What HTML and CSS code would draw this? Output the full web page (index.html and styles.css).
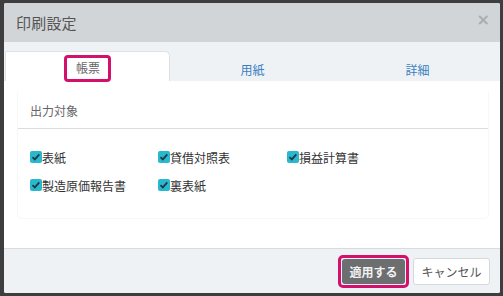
FILE: index.html
```html
<!DOCTYPE html>
<html lang="ja">
<head>
<meta charset="utf-8">
<link rel="stylesheet" href="styles.css">
</head>
<body>
<div class="dialog">
  <div class="header">
    <span class="title">印刷設定</span>
    <span class="close">×</span>
  </div>
  <div class="tabs">
    <div class="tab active"><span class="highlight">帳票</span></div>
    <div class="tab">用紙</div>
    <div class="tab">詳細</div>
  </div>
  <div class="body">
    <div class="panel">
      <div class="legend">出力対象</div>
      <div class="checks">
        <label class="check"><span class="box"><svg viewBox="0 0 12 12" width="12" height="12"><path d="M2.5 6.2 L4.8 8.4 L9.3 3.4" fill="none" stroke="#1d3a44" stroke-width="1.8"/></svg></span>表紙</label>
        <label class="check"><span class="box"><svg viewBox="0 0 12 12" width="12" height="12"><path d="M2.5 6.2 L4.8 8.4 L9.3 3.4" fill="none" stroke="#1d3a44" stroke-width="1.8"/></svg></span>貸借対照表</label>
        <label class="check"><span class="box"><svg viewBox="0 0 12 12" width="12" height="12"><path d="M2.5 6.2 L4.8 8.4 L9.3 3.4" fill="none" stroke="#1d3a44" stroke-width="1.8"/></svg></span>損益計算書</label>
        <label class="check"><span class="box"><svg viewBox="0 0 12 12" width="12" height="12"><path d="M2.5 6.2 L4.8 8.4 L9.3 3.4" fill="none" stroke="#1d3a44" stroke-width="1.8"/></svg></span>製造原価報告書</label>
        <label class="check"><span class="box"><svg viewBox="0 0 12 12" width="12" height="12"><path d="M2.5 6.2 L4.8 8.4 L9.3 3.4" fill="none" stroke="#1d3a44" stroke-width="1.8"/></svg></span>裏表紙</label>
      </div>
    </div>
  </div>
  <div class="footer">
    <span class="ring"><button class="btn primary">適用する</button></span>
    <button class="btn cancel">キャンセル</button>
  </div>
</div>
</body>
</html>
```
FILE: styles.css
```css
* { box-sizing: border-box; }
html, body { margin: 0; }
body {
  background: #3e3e3e;
  padding: 3px 3px 3px 4px;
  font-family: "Noto Sans CJK JP", "Noto Sans", sans-serif;
  width: 503px;
  height: 296px;
  overflow: hidden;
}
.dialog {
  width: 496px;
  height: 290px;
  background: #fff;
  display: flex;
  flex-direction: column;
  border-radius: 2px;
  overflow: hidden;
}
.header {
  height: 39px;
  background: #d2d5d8;
  display: flex;
  align-items: center;
  justify-content: space-between;
  padding: 0 10px 0 12px;
}
.title {
  font-size: 15px;
  color: #555;
  letter-spacing: 0.2px;
}
.close {
  font-family: "DejaVu Sans", sans-serif;
  font-size: 16px;
  font-weight: bold;
  color: #a9acaf;
  margin-top: -6px;
}
.tabs {
  height: 39px;
  background: #eef2f5;
  display: flex;
  align-items: flex-end;
  padding-left: 1px;
}
.tab {
  width: 165px;
  height: 30px;
  display: flex;
  align-items: center;
  justify-content: center;
  font-size: 12px;
  color: #3a7fc0;
  padding-top: 6px;
}
.tab.active {
  background: #fff;
  color: #666;
  border: 1px solid #dfe2e5;
  border-bottom: none;
  border-radius: 0 5px 0 0;
  justify-content: flex-start;
  padding-left: 58px;
  padding-top: 4px;
}
.highlight {
  display: inline-block;
  border: 3px solid #d3106c;
  border-radius: 4px;
  padding: 1px 8px 2px 9px;
  line-height: 18px;
}
.body {
  flex: 1;
  padding: 11px 11px 0 13px;
}
.panel {
  border: 1px solid #f6f7f8;
  border-top: none;
  border-radius: 0 0 5px 5px;
  height: 127px;
}
.legend {
  height: 37px;
  border-bottom: 1px solid #dcdcdc;
  padding: 10px 0 0 12px;
  font-size: 12px;
  color: #666;
}
.checks {
  display: grid;
  grid-template-columns: 128px 129px 128px;
  grid-auto-rows: 28px;
  padding: 14px 0 0 12px;
}
.check {
  display: flex;
  align-items: center;
  font-size: 12px;
  color: #333;
}
.box {
  width: 12px;
  height: 12px;
  background: #2ab8cf;
  border-radius: 2px;
  display: inline-flex;
}
.box svg { display: block; }
.footer {
  height: 45px;
  margin-top: auto;
  background: #eef2f5;
  border-top: 1px solid #d9dcdf;
  display: flex;
  align-items: center;
  justify-content: flex-end;
  padding: 0 10px 0 0;
  gap: 4px;
}
.ring {
  display: inline-block;
  border: 3px solid #d3106c;
  border-radius: 5px;
  padding: 1px;
  margin-top: 1px;
}
.btn {
  font-family: "Noto Sans CJK JP", "Noto Sans", sans-serif;
  font-size: 12px;
  border-radius: 3px;
  cursor: pointer;
}
.primary {
  display: block;
  width: 63px;
  height: 25px;
  background: #6c6e70;
  color: #f2f2f2;
  font-weight: bold;
  border: none;
  padding: 0;
}
.cancel {
  width: 77px;
  height: 27px;
  background: #fff;
  color: #555;
  border: 1px solid #d6d9dc;
  padding: 0;
}
```
